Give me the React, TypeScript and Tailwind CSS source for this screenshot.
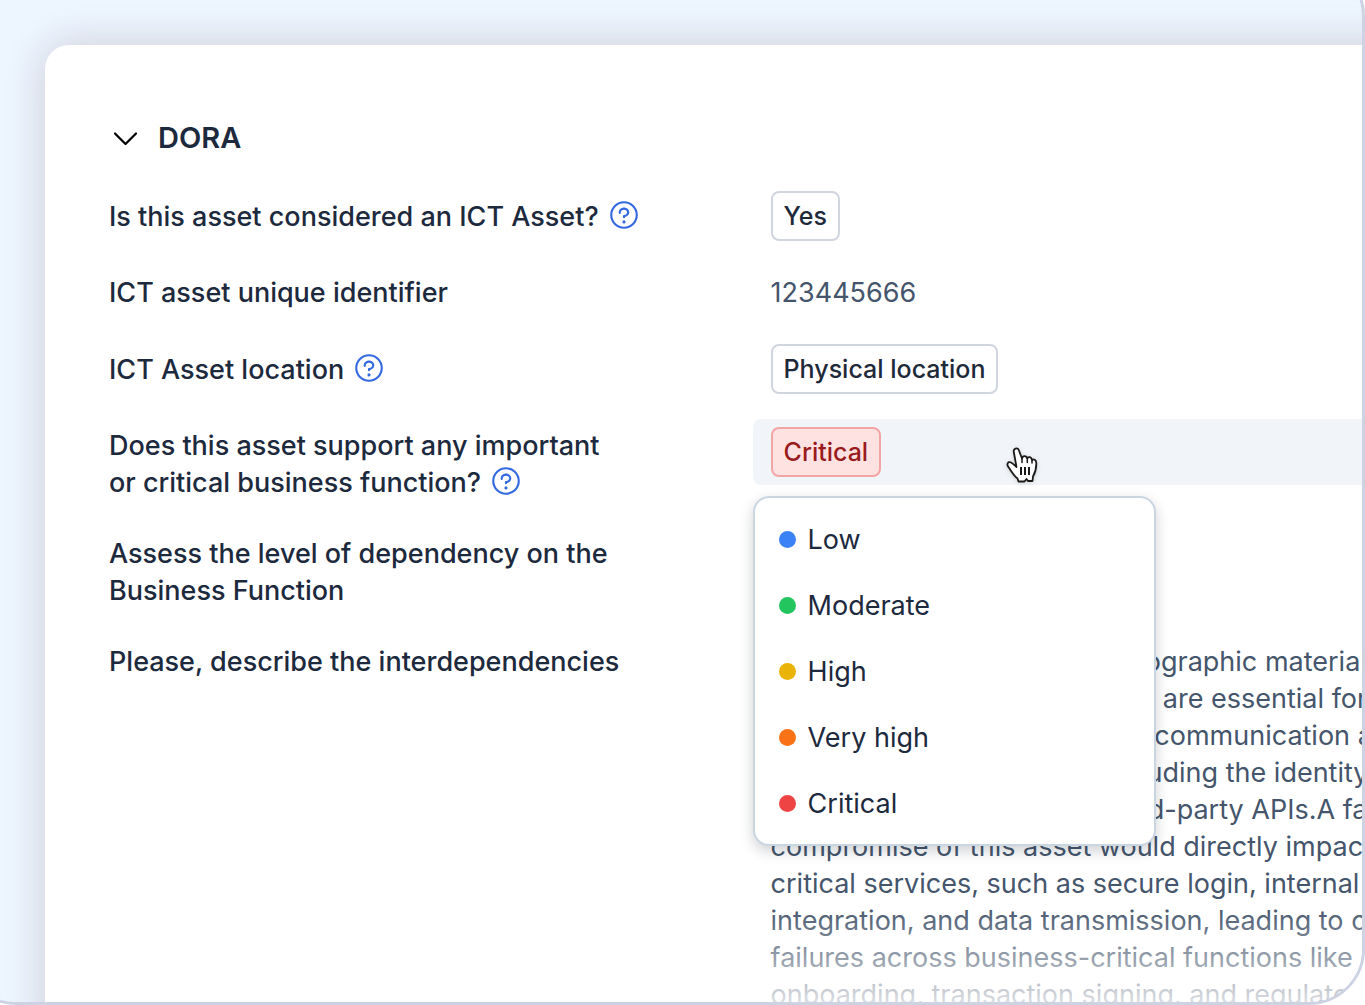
import { useState } from 'react'
import type { ReactNode } from 'react'
import { PiQuestion } from 'react-icons/pi'

const levels = [
  { name: 'Low', dot: 'bg-[#3b82f6]' },
  { name: 'Moderate', dot: 'bg-[#22c55e]' },
  { name: 'High', dot: 'bg-[#eab308]' },
  { name: 'Very high', dot: 'bg-[#f97316]' },
  { name: 'Critical', dot: 'bg-[#ef4444]' },
]

const description = [
  'This asset stores all the cryptographic materials and',
  'digital certificates for TLS that are essential for',
  'authentication and voice data communication and',
  'the core trading platform, including the identity',
  'gateway, and also several third-party APIs.A failure',
  'compromise of this asset would directly impact',
  'critical services, such as secure login, internal API',
  'integration, and data transmission, leading to critical',
  'failures across business-critical functions like client',
  'onboarding, transaction signing, and regulatory',
]

function Help({ label }: { label: string }) {
  return (
    <button type="button" aria-label={label} className="ml-2 inline-flex align-[-6px] text-[#3469e0]">
      <PiQuestion className="w-[34px] h-[34px] -my-1" />
    </button>
  )
}

function Row({ label, help, children }: { label: ReactNode; help?: string; children?: ReactNode }) {
  return (
    <div className="grid grid-cols-[528fr_472fr] items-center">
      <div className="font-medium text-slate-800">
        {label}
        {help && <Help label={help} />}
      </div>
      <div className="min-w-0 text-slate-600">{children}</div>
    </div>
  )
}

function Chip({ children }: { children: ReactNode }) {
  return (
    <span className="inline-block rounded-lg border-2 border-[#d0d5e0] px-[11px] text-[25px] leading-[46px] font-medium text-gray-800 align-top">
      {children}
    </span>
  )
}

function HandCursor() {
  return (
    <svg viewBox="0 0 32 36" className="pointer-events-none absolute left-[253px] top-[28px] w-8 h-9 drop-shadow-sm" aria-hidden="true">
      <path
        d="M10.500 20 7.800 5C7 1.500 11.500 0 12.800 3L16 11.500C16.500 8 20.500 8.500 21.300 11.500 22.300 9 25.500 10 26 13 27.500 11.500 30.300 13 30.300 16 30.500 22 29 26 27 29.500L26.500 34H22L20.500 32 18.500 34.500H12.500L11.500 31.500C7.500 28.500 5.500 24.500 2.800 20.500 0 17.500 2 14 5 15.500 7.500 16.800 8.500 18.500 10.500 20Z"
        fill="#fff"
        stroke="#1a1a1a"
        strokeWidth="1.800"
        strokeLinejoin="round"
      />
      <path d="M15 20v8M19 20v8M23 20v8" stroke="#000" strokeWidth="1.800" />
      <path d="M16 11.500v4M21.300 11.500v4M26 13v3" stroke="#1a1a1a" strokeWidth="1.500" strokeLinecap="round" />
    </svg>
  )
}

export default function App() {
  const [open, setOpen] = useState(true)
  const [level, setLevel] = useState('Critical')

  return (
    <main className="flex h-screen overflow-hidden bg-white font-['Inter',sans-serif] text-[27px] leading-[37px]">
      <div className="-mt-10 -ml-10 flex min-w-0 flex-1 overflow-hidden rounded-[56px] border-[3px] border-[#cdd3e3] bg-[#edf5ff] pt-[82px] pl-[82px]">
        {/* The card bleeds past the right and bottom edges of the frame */}
        <section className="relative -mr-10 -mb-10 min-w-0 flex-1 rounded-tl-3xl bg-white pt-[74px] pr-10 pl-16 shadow-[0_0_40px_rgba(50,30,40,0.18)]">
          <h2 className="text-[29px] font-semibold text-slate-800">
            <button type="button" className="flex items-center gap-[17px]">
              <svg viewBox="0 0 32 32" className="w-8 h-8" fill="none" stroke="#000" strokeWidth="2.200" strokeLinecap="round" strokeLinejoin="round" aria-hidden="true">
                <path d="m6 11.500 10.500 10.500L27 11.500" />
              </svg>
              DORA
            </button>
          </h2>

          <div className="mt-[35px] flex flex-col gap-[33px]">
            <Row label="Is this asset considered an ICT Asset?" help="About ICT assets">
              <Chip>Yes</Chip>
            </Row>
            <Row label="ICT asset unique identifier">123445666</Row>
            <Row label="ICT Asset location" help="About asset location">
              <Chip>Physical location</Chip>
            </Row>

            <div className="flex flex-col gap-[34px]">
              <div className="grid grid-cols-[528fr_472fr] items-start">
                <div className="font-medium text-slate-800">
                  Does this asset support any important
                  <br />
                  or critical business function?
                  <Help label="About business functions" />
                </div>
                <div className="relative z-10 -mt-2 -ml-[18px] rounded-l-lg bg-slate-100 py-2 pl-[18px]">
                  <button
                    type="button"
                    aria-haspopup="listbox"
                    aria-expanded={open}
                    onClick={() => setOpen(!open)}
                    className="block rounded-lg border-2 border-[#f3a5a5] bg-[#fee2e2] px-[11px] text-[25px] leading-[46px] font-medium text-[#991b1b]"
                  >
                    {level}
                  </button>
                  <HandCursor />
                  {open && (
                    <div role="listbox" className="absolute top-full left-0 mt-[11px] w-[403px] rounded-2xl border-2 border-slate-300 bg-white py-2 shadow-[0_5px_14px_rgba(15,23,42,0.2)]">
                      {levels.map((l) => (
                        <button
                          key={l.name}
                          type="button"
                          role="option"
                          aria-selected={l.name === level}
                          onClick={() => setLevel(l.name)}
                          className="flex h-[66px] w-full items-center gap-3 px-6 text-slate-800"
                        >
                          <span className={`w-[17px] h-[17px] rounded-full ${l.dot}`} />
                          {l.name}
                        </button>
                      ))}
                    </div>
                  )}
                </div>
              </div>

              <Row
                label={
                  <>
                    Assess the level of dependency on the
                    <br />
                    Business Function
                  </>
                }
              />

              <div className="grid grid-cols-[528fr_472fr] items-start">
                <div className="font-medium text-slate-800">Please, describe the interdependencies</div>
                <p className="min-w-0 whitespace-nowrap text-slate-600">
                  {description.map((line) => (
                    <span key={line} className="block">{line}</span>
                  ))}
                </p>
              </div>
            </div>
          </div>

          <div className="pointer-events-none absolute inset-x-0 bottom-10 h-24 bg-gradient-to-b from-transparent to-white/80" />
        </section>
      </div>
    </main>
  )
}
